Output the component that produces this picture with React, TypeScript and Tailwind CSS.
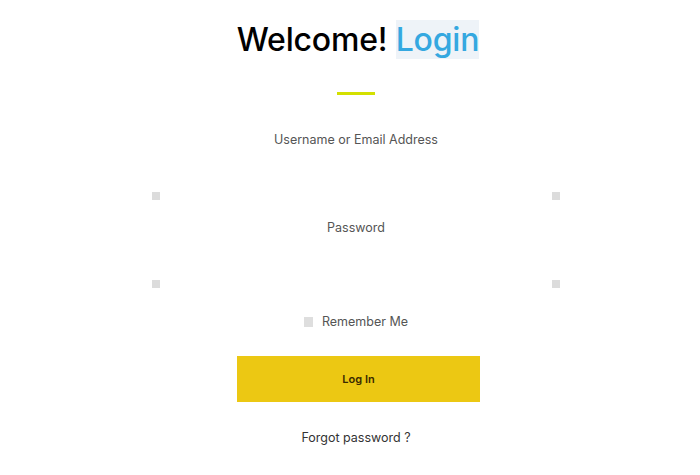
import React, { useState } from 'react';

// Field with faint border and the little grey corner marks
const Field = ({ label, type }) => {
  const [value, setValue] = useState('');
  return (
    <div className="flex flex-col items-center">
      <label className="text-[12.5px] leading-[18px] text-[#555]">{label}</label>
      <div className="relative mt-[11px] w-full">
        <input
          type={type}
          value={value}
          onChange={(e) => setValue(e.target.value)}
          className="block h-[40px] w-full bg-white px-3 text-[13px] outline-none"
        />
        <span className="absolute bottom-0 left-0 h-[8px] w-[8px] bg-[#dcdcdc]" />
        <span className="absolute bottom-0 right-0 h-[8px] w-[8px] bg-[#dcdcdc]" />
      </div>
    </div>
  );
};

const App = () => {
  const [remember, setRemember] = useState(false);

  return (
    <div
      className="min-h-[475px] w-full bg-white"
      style={{ fontFamily: '"Inter", "Liberation Sans", sans-serif' }}
    >
      <div className="ml-[152px] flex w-[408px] flex-col items-center pt-[22px]">
        {/* Title */}
        <h1 className="ml-[4px] text-[32px] font-medium leading-[36px] tracking-[-0.2px] text-black">
          Welcome! <span className="bg-[#eef3f8] text-[#35a8e0]">Login</span>
        </h1>
        <div className="mt-[34px] h-[3px] w-[38px] bg-[#d3e000]" />

        {/* Form */}
        <form className="mt-[36px] flex w-full flex-col" onSubmit={(e) => e.preventDefault()}>
          <Field label="Username or Email Address" type="text" />
          <div className="mt-[19px]">
            <Field label="Password" type="password" />
          </div>

          <label className="mt-[25px] flex items-center justify-center gap-[9px] text-[12.5px] text-[#555]">
            <input
              type="checkbox"
              checked={remember}
              onChange={() => setRemember(!remember)}
              className="h-[10px] w-[9px] appearance-none bg-[#dedede]"
            />
            Remember Me
          </label>

          <div className="mt-[24px] flex justify-center pl-[5px]">
            <button
              type="submit"
              className="h-[46px] w-[243px] bg-[#ecc813] text-[11px] font-semibold text-[#3a2a00]"
            >
              Log In
            </button>
          </div>

          <a href="#" className="mt-[27px] text-center text-[12.5px] text-[#333]">
            Forgot password ?
          </a>
        </form>
      </div>
    </div>
  );
};

export default App;
